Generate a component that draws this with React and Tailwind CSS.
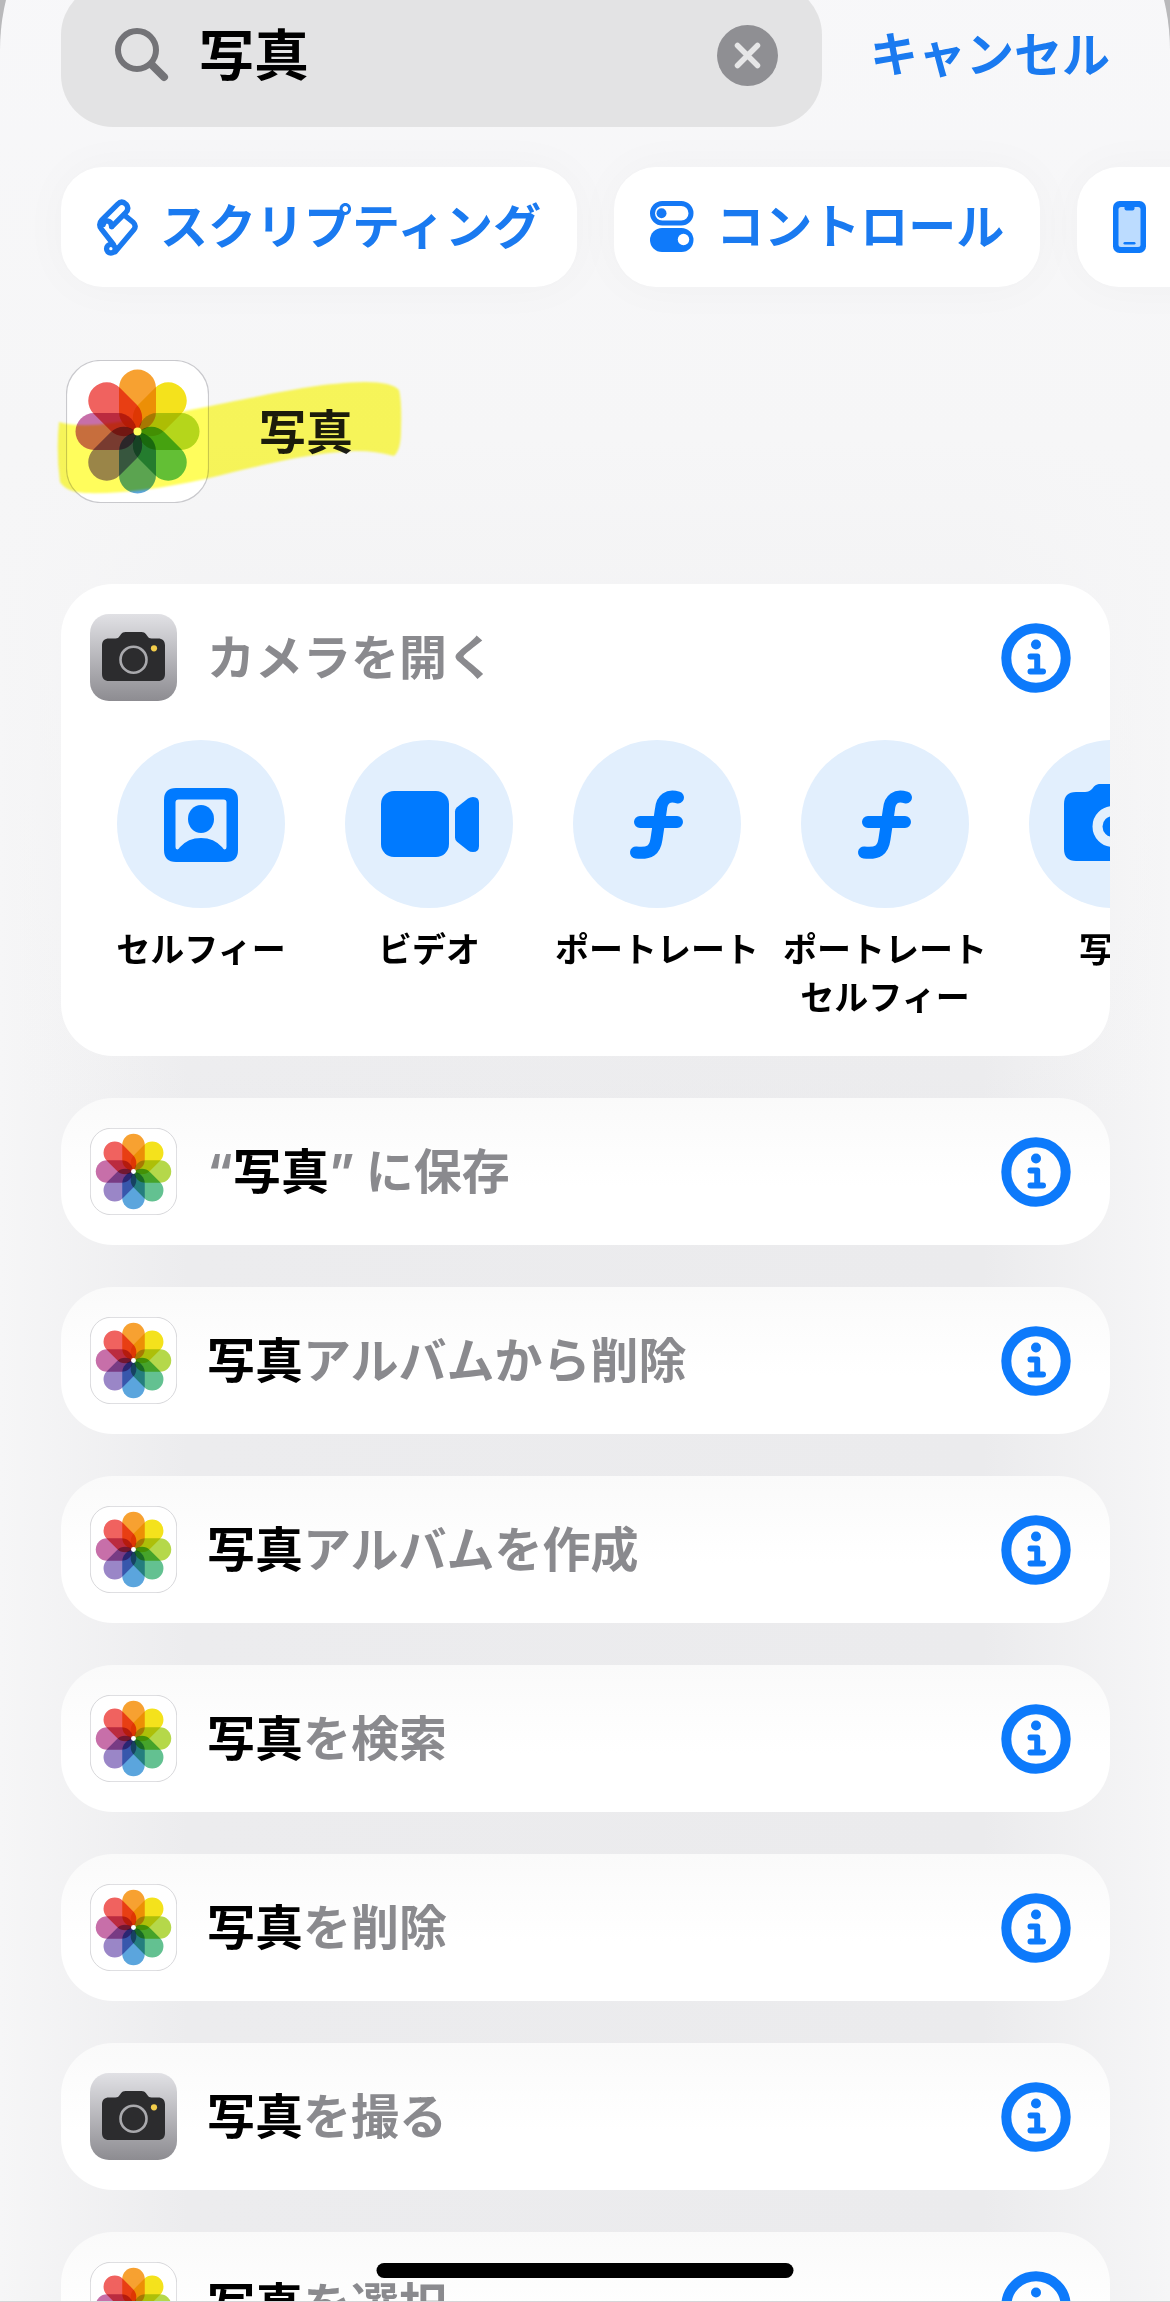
const FONT = 'font-["Inter","Noto_Sans_CJK_JP",sans-serif]';

const PETALS = [
  ["#f7a131", 0],
  ["#f4e21c", 45],
  ["#b5d84a", 90],
  ["#63c191", 135],
  ["#5ba5dd", 180],
  ["#9a86c7", 225],
  ["#c76fa9", 270],
  ["#f0625f", 315],
];

function PhotosIcon({ className }) {
  return (
    <svg viewBox="0 0 143 143" className={className} aria-hidden="true">
      <rect x="0.5" y="0.5" width="142" height="142" rx="34" fill="#fff" stroke="#c9c9cd" strokeWidth="1.200" />
      <g className="isolate">
        {PETALS.map(([color, angle]) => (
          <rect
            key={angle}
            x="53"
            y="9.5"
            width="37"
            height="61"
            rx="18.5"
            fill={color}
            transform={`rotate(${angle} 71.5 71.5)`}
            className="mix-blend-multiply"
          />
        ))}
      </g>
      <circle cx="71.5" cy="71.5" r="4" fill="#fff" />
    </svg>
  );
}

function CameraAppIcon({ className }) {
  return (
    <svg viewBox="0 0 87 87" className={className} aria-hidden="true">
      <defs>
        <linearGradient id="cameraTile" x1="0" y1="0" x2="0" y2="1">
          <stop offset="0" stopColor="#e1e1e5" />
          <stop offset="1" stopColor="#8d8c91" />
        </linearGradient>
      </defs>
      <rect width="87" height="87" rx="19" fill="url(#cameraTile)" />
      <path
        d="M19 24.500h6.500c2 0 3-.8 4-2.200l1.500-2c1.200-1.600 2.500-2.300 4.500-2.300h16c2 0 3.300.7 4.500 2.300l1.500 2c1 1.400 2 2.200 4 2.200H68c4.500 0 7 2.500 7 7V60c0 4.500-2.500 7-7 7H19c-4.500 0-7-2.500-7-7V31.500c0-4.500 2.500-7 7-7z"
        fill="#2c2c2e"
      />
      <circle cx="43.500" cy="45.700" r="13" fill="none" stroke="#a9a9ad" strokeWidth="2.600" />
      <circle cx="64" cy="34.300" r="3.100" fill="#f3cd4b" />
    </svg>
  );
}

function InfoIcon() {
  return (
    <svg viewBox="0 0 70 70" className="size-[70px]" aria-hidden="true">
      <circle cx="35" cy="35" r="29.700" fill="none" stroke="#0d7afb" strokeWidth="10" />
      <circle cx="35" cy="21.500" r="5" fill="#0d7afb" />
      <path d="M29.500 33.400h6.700v15.200M29.500 48.600h12.500" fill="none" stroke="#0d7afb" strokeWidth="6" strokeLinecap="round" strokeLinejoin="round" />
    </svg>
  );
}

function ScriptIcon() {
  return (
    <svg viewBox="36 38 122 172" className="h-[57px] w-[41px]" fill="none" stroke="#1a7af0" strokeWidth="16" strokeLinejoin="round" strokeLinecap="round" aria-hidden="true">
      <path d="M80 121L121 80Q134 67 123 54Q110 41 97 54L50 101Q38 114 48 128L84 174" />
      <path d="M54 115Q56 104 67 104Q79 106 79 121" />
      <path d="M117 86L145 109Q155 119 146 131L90 197" />
      <circle cx="77" cy="188" r="13" />
    </svg>
  );
}

function TogglesIcon() {
  return (
    <svg viewBox="0 0 44 52" className="h-[52px] w-[44px]" aria-hidden="true">
      <rect x="2.500" y="2.500" width="38.500" height="19.500" rx="9.750" fill="none" stroke="#1478f5" strokeWidth="5" />
      <circle cx="11.500" cy="12.300" r="5" fill="#1478f5" />
      <rect x="0" y="27" width="43.500" height="24" rx="12" fill="#0f7afa" />
      <circle cx="33.500" cy="38.500" r="5.700" fill="#fff" />
    </svg>
  );
}

function PhoneIcon() {
  return (
    <svg viewBox="0 0 33 52" className="h-[52px] w-[33px] shrink-0" aria-hidden="true">
      <rect width="33" height="52" rx="6.500" fill="#0f7afa" />
      <rect x="5.500" y="6" width="22" height="40" rx="2.500" fill="#bcdcff" />
      <path d="M11.500 5h10v2.500q0 2-2 2h-6q-2 0-2-2z" fill="#0f7afa" />
      <rect x="10.500" y="41" width="12" height="2.600" rx="1.300" fill="#0f7afa" />
    </svg>
  );
}

function SelfieGlyph() {
  return (
    <>
      <path
        fillRule="evenodd"
        d="M59 48h50q12 0 12 12v50q0 12-12 12H59q-12 0-12-12V60q0-12 12-12zM61.500 59.500q-3 0-3 3V107q0 3 2.500 2.300q1-.5 1.800-2Q71 98 84 98t21.200 9.300q.8 1.500 1.800 2q2.500.7 2.500-2.300V62.500q0-3-3-3z"
      />
      <ellipse cx="84" cy="79" rx="13" ry="14" />
    </>
  );
}

function VideoGlyph() {
  return (
    <>
      <rect x="36" y="51" width="68" height="66" rx="13" />
      <path d="M110 71.500q0-2.500 2-4.200L123 58.500q2-1.500 5-1.500 6 0 6 6v43q0 6-6 6-3 0-5-1.500L112 101.700q-2-1.700-2-4.200z" />
    </>
  );
}

function FunctionGlyph() {
  return (
    <path
      d="M105 57.500C95 54.500 89 59 88 69L83.500 99C82 110 77 114 63 112.500M67 82h37"
      fill="none"
      stroke="#007aff"
      strokeWidth="12"
      strokeLinecap="round"
      strokeLinejoin="round"
    />
  );
}

function CameraGlyph() {
  return (
    <>
      <path d="M47 52h9c3 0 5-1 7-3l2-2.500c2-2 4-2.500 7-2.500h24c3 0 5 .5 7 2.500l2 2.500c2 2 4 3 7 3h9c8 0 12 4 12 12v45c0 8-4 12-12 12H47c-8 0-12-4-12-12V64c0-8 4-12 12-12z" />
      <circle cx="84" cy="86.500" r="15.500" fill="none" stroke="#e2effd" strokeWidth="10" />
    </>
  );
}

const MODES = [
  ["セルフィー", SelfieGlyph],
  ["ビデオ", VideoGlyph],
  ["ポートレート", FunctionGlyph],
  ["ポートレートセルフィー", FunctionGlyph],
  ["写真", CameraGlyph],
];

const ACTIONS = [
  { id: "save", app: PhotosIcon, before: "“", match: "写真", after: "” に保存" },
  { id: "remove-album", app: PhotosIcon, match: "写真", after: "アルバムから削除" },
  { id: "create-album", app: PhotosIcon, match: "写真", after: "アルバムを作成" },
  { id: "find", app: PhotosIcon, match: "写真", after: "を検索" },
  { id: "delete", app: PhotosIcon, match: "写真", after: "を削除" },
  { id: "take", app: CameraAppIcon, match: "写真", after: "を撮る" },
  { id: "select", app: PhotosIcon, match: "写真", after: "を選択" },
];

function ActionHeader({ app: App, before, match, after }) {
  return (
    <div className="flex items-center pr-[39px] pl-[29px]">
      <App className="size-[87px] shrink-0" />
      <p className="ml-[30px] flex-1 text-[48px] leading-[72px] font-bold whitespace-pre text-[#8a8a8e]">
        {before}
        {match && <span className="text-black">{match}</span>}
        {after}
      </p>
      <button type="button" aria-label="情報">
        <InfoIcon />
      </button>
    </div>
  );
}

function Chip({ icon, label }) {
  return (
    <button
      type="button"
      aria-label={label ?? "デバイス"}
      className="flex h-[120px] min-w-[240px] shrink-0 items-center gap-[22px] rounded-[42px] bg-white px-9 text-[48px] leading-[72px] font-bold whitespace-nowrap text-[#1a7af0] shadow-[0_0_48px_rgba(0,0,0,0.03)]"
    >
      {icon}
      {label}
    </button>
  );
}

export default function App() {
  return (
    <div className={`${FONT} relative h-screen overflow-hidden bg-[#b9b9bb]`} lang="ja">
      <main className="-mt-[161px] min-h-full rounded-t-[211px] bg-[linear-gradient(to_bottom,#f8f8fa_0,#f6f6f7_600px,#f5f5f700_1300px),linear-gradient(to_right,#f6f6f7_0%,#ececee_16%,#ebebed_84%,#f6f6f7_100%)] pt-[144px] pr-[60px] pl-[61px]">
        <div className="flex items-center">
          <div className="flex h-[144px] min-w-0 flex-1 items-center rounded-[52px] bg-[#e3e3e4] pr-[44px] pl-[54px]">
            <svg viewBox="0 0 54 54" className="size-[54px] shrink-0" fill="none" stroke="#737377" strokeLinecap="round" aria-hidden="true">
              <circle cx="22" cy="22" r="19" strokeWidth="6" />
              <path d="M37 37l12 12" strokeWidth="8" />
            </svg>
            <input
              type="text"
              aria-label="検索"
              defaultValue="写真"
              className="ml-[30px] h-[80px] min-w-0 flex-1 bg-transparent text-[55px] leading-[80px] font-bold text-black outline-none"
            />
            <button type="button" aria-label="消去">
              <svg viewBox="0 0 61 61" className="size-[61px]" aria-hidden="true">
                <circle cx="30.500" cy="30.500" r="30.500" fill="#8f8f93" />
                <path d="M20.500 20.500l20 20M40.500 20.500l-20 20" stroke="#e6e6e7" strokeWidth="5.500" strokeLinecap="round" />
              </svg>
            </button>
          </div>
          <button type="button" className="ml-[48px] text-[48px] leading-[72px] font-bold whitespace-nowrap text-[#1a7af0]">
            キャンセル
          </button>
        </div>

        <div className="mt-10 -mr-[60px] flex gap-[37px]">
          <Chip icon={<ScriptIcon />} label="スクリプティング" />
          <Chip icon={<TogglesIcon />} label="コントロール" />
          <Chip icon={<PhoneIcon />} />
        </div>

        <div className="relative mt-[73px] flex items-center pl-[5px]">
          <PhotosIcon className="size-[143px]" />
          <h1 className="ml-[50px] text-[47px] leading-[72px] font-bold text-[#1c1c1e]">写真</h1>
          <svg viewBox="0 0 380 180" className="absolute -top-5 -left-[21px] h-[180px] w-[380px] mix-blend-multiply" aria-hidden="true">
            <path
              d="M19 82Q40 88 72 83C130 75 165 67 210 58C255 49 285 43 325 42Q352 42 359 50Q362 62 361 90Q361 110 354 116C335 111 320 110 300 112C260 115 215 127 165 139C120 149 80 154 45 153Q26 152 20 142Q16 112 19 82Z"
              fill="#fffd5c"
              className="blur-[1px]"
            />
          </svg>
        </div>

        <ul className="mt-[81px] flex flex-col gap-[42px]">
          <li className="overflow-hidden rounded-[52px] bg-white pt-[30px] pb-[34px]">
            <ActionHeader app={CameraAppIcon} after="カメラを開く" />
            <div className="mt-[39px] flex pl-[26px]">
              {MODES.map(([label, Glyph]) => (
                <button key={label} type="button" className="flex w-[228px] shrink-0 flex-col items-center px-3">
                  <svg viewBox="0 0 168 168" className="size-[168px]" fill="#007aff" aria-hidden="true">
                    <circle cx="84" cy="84" r="84" fill="#e2effd" />
                    <Glyph />
                  </svg>
                  <span className="mt-[18px] text-[34px] leading-[48px] font-bold text-black">{label}</span>
                </button>
              ))}
            </div>
          </li>
          {ACTIONS.map(({ id, ...action }) => (
            <li key={id} className="rounded-[52px] bg-linear-to-b from-[#fafafa] to-white to-60% py-[30px]">
              <ActionHeader {...action} />
            </li>
          ))}
        </ul>
      </main>
      <div className="absolute bottom-6 left-1/2 h-[15px] w-[417px] -translate-x-1/2 rounded-full bg-black" />
      <div className="absolute bottom-0 h-px w-full bg-[#d5d5d8]" />
    </div>
  );
}
